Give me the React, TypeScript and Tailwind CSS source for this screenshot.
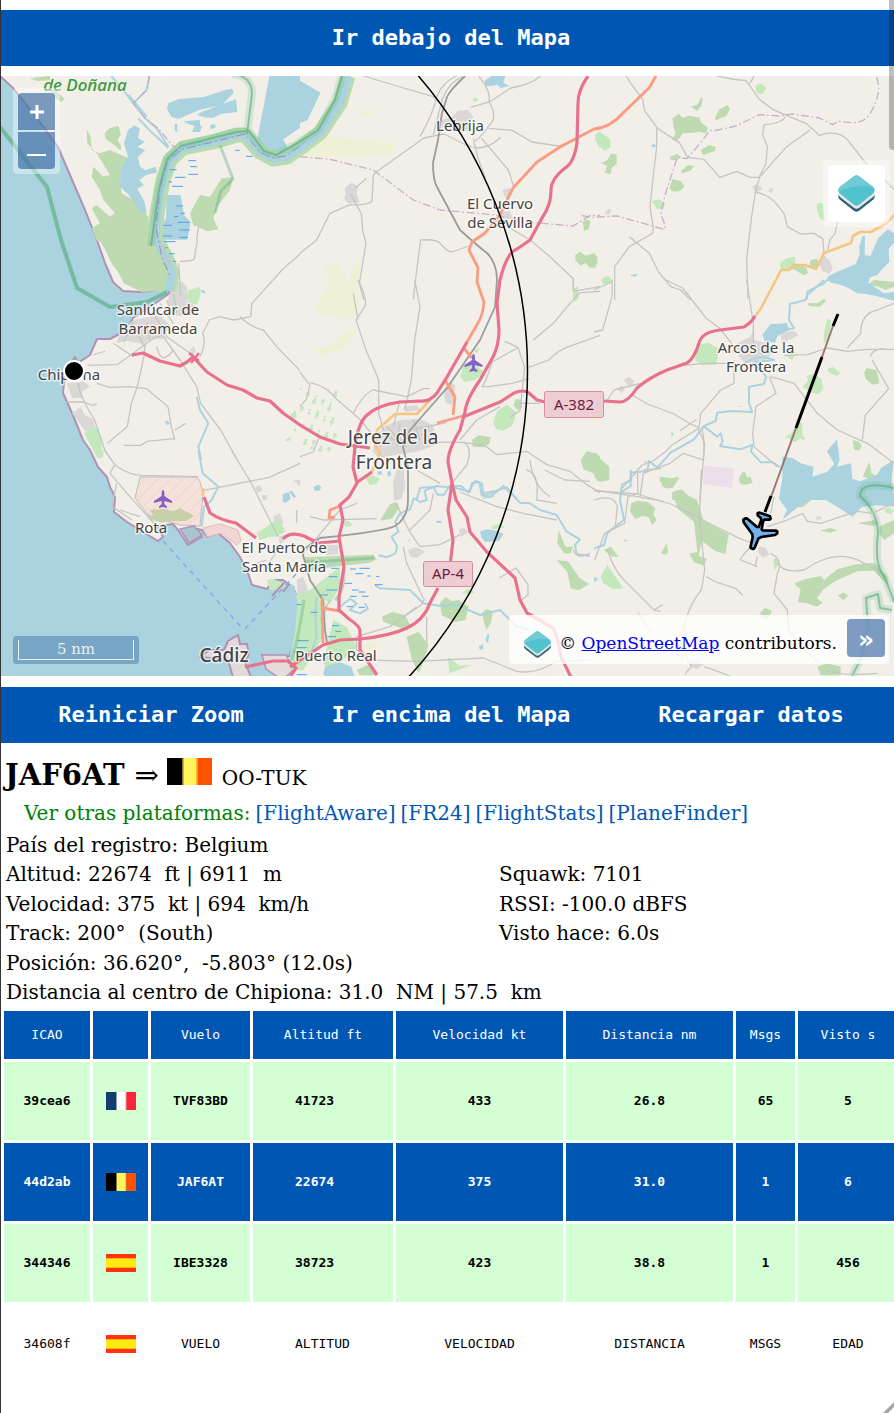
import type { ReactNode } from 'react';

type Tile = {
  at: [number, number];
  wood?: string[];
  park?: string[];
  field?: string[];
  urban?: string[];
  water?: string[];
  stream?: string[];
  minor?: string[];
  admin?: string[];
  marsh?: string[];
};

/* Land cover and minor lines. Coordinates are thirds of a map unit, from the tile's corner. */
const tiles: Tile[] = [
  {
    at: [0, 0],
    wood: [
      'M260 388L272 410 275 450 300 460 330 450 385 475 388 500 360 540 365 580 400 600 445 650 450 722 290 722 275 685 300 670 275 625 290 615 330 650 345 640 310 600 300 570 275 530 280 500 310 530 330 525 290 460 262 430z',
      'M314 400L330 384 356 378 362 404 352 420 364 438 362 452 344 436 318 418z',
      'M665 535L700 532 690 570 655 615 640 655 655 688 622 694 580 675 570 640 600 585 630 590z',
      'M90 235l60-8 0 14-40 2z',
      'M150 264l20 10 24 24-12 8-22-18z',
    ],
    water: [
      'M808 228l92 0 0 155-50 35 12 24-22 22-50-6-18-40z',
      'M505 310l30-12 80-8 60-20 22-4 4 12-34 36-70 16-60 26-22-4-14-26z',
      'M600 338l66-26 42-14 4 38-50 6-24 12-26-2-20-8z',
      'M384 390L404 376 420 386 414 414 434 426 412 440 436 450 414 470 420 500 436 510 468 500 470 518 440 524 418 540 432 556 412 566 434 606 440 642 420 634 386 584 360 560 362 510 384 470 372 430z',
      'M500 585l42 0 10 60 20 20-10 54-72 0-6-40 14-26z',
      'M550 364l50-4 0 20-30-6zM586 372l20 6-6 18-24 0zM524 372l8 0 0 24-8-4zM630 376l14-4 4 10-16 6z',
    ],
    stream: ['M334 228L370 270 400 310 436 355 470 385 505 440', 'M448 228L440 270 400 310', 'M385 285l55 65M415 355l40 42 50 46'],
    minor: ['M596 680L590 720'],
    admin: ['M448 228l-8 42-40 40 36 46 40 30 40 50 30 16'],
    marsh: ['M565 482h23M570 500h22M565 523h29M510 509h20M525 532h32M506 546h10M516 559h33M706 451h13M738 469h20M529 618h20M543 640h12M533 667h34M522 650h13M490 676h26M538 690h31M488 708h29M538 712h26'],
  },
  {
    at: [300, 60],
    wood: ['M826 585l14-10 16 12 26-8 10 20-6 24-16 0-14-14-14 8-16-16zM848 486l12-8 12 6-6 24-14 4z'],
    park: ['M886 222l14-8 0 50-14-24zM518 116l12-4 4 10-12 4zM820 686l14-8 0 24-16 16z'],
    field: ['M0 240l90-10 195 22-10 30-130 8-145 0z', 'M75 620l40-8 30 60 20-60 16 0-6 90 30 16-110 0z', 'M180 155l30-6 10 16-30 6zM340 78l16-6 0 16-14 4z'],
    urban: ['M425 180l30-8 20-20 30-2 16 22-14 16 10 22-30 4-40-6-20 6zM134 384l20-16 20 10-4 20 8 30-34 2-12-14 6-16zM606 390l24-6 8 20-20 12zM600 456l30-2 8 20-26 8z'],
    water: ['M0 62l62 36-40 82-22 10z', 'M554 62l20-14 42 0-6 20 18 10-26 6-10-10-16 4-20 0z'],
    minor: [
      'M190 48L290 78 400 110 415 125', 'M470 48q-40 16-60 62-10 50-50 120', 'M0 580l50-40 40-80 60-26q50 4 66-10l4-80 12-10 140-100 60-12 60 30q60 30 110-20',
      'M400 225q20-80 28-110 20-50 60-65', 'M512 142l60-18 60-40q60-10 90-36', 'M536 48q40 50 30 75 30 50 0 75-20 30-40 45', 'M566 205l70 6 60 35 80 12 50-18',
      'M545 235l80 95 16 50', 'M520 235l14 60 22 60', 'M165 385l35-30', 'M150 400l34 60 4 50 10 40-20 120 14 50', 'M340 718l8-70 14-108q50-4 60 12 20 24 34 24l50-18', 'M590 480l100 60 60 50 70 66 0 36', 'M900 680l-80 14',
    ],
    admin: ['M0 290l90 8 130 32 120 90 80 30 160 14 100 22 140 12 50-32 30 0'],
  },
  {
    at: [594, 60],
    wood: [
      'M235 175l20-14 10 12 20-6 32 6 4 14 20 16-4 18-20-6-30 4-20 0-18 26-14-6 10-20-6-16zM290 140l20-6 12-22 4 4-4 22-12 14zM362 175l14-26 24-14 8 12-12 22-30 12zM320 270l24-14 20 4 0 12-22 8-14 6zM228 290l20-8 14 10-14 8-18 0zM262 332l20-16 18 2-10 14-26 8zM226 385l10-28 24 6 12 16-14 14-20 2zM22 310l18-10 12-20 16 4 0 28-14 10-4 20-18-4 8-20z',
      'M0 580l10 10 0 20-10 10zM580 620l20-10 36 12 6 18-14 6-20-14zM650 600l20-4 8 16-20 16-12-8z',
    ],
    park: ['M5 225l14-8 30 20 0 26-18 10-20-18zM484 78l16-8 18 14-14 20-16-6zM174 424l20-6 20 14-6 14-20 0zM22 656l20-8 14 12-14 12-18-6zM558 610l20-16 26-4 0 20-20 16-24 0zM668 432l18-4 4 26 2 30-14-10-8-20z'],
    urban: ['M30 460l14-14 8 4-6 14zM474 380l16-8 16 14-20 12zM524 386l16-2-6 14-10-2zM674 610l16-24 18 16 8 26-10 14-20-8z'],
    water: ['M700 650L720 640 755 625 785 612 797 584 796 560 806 528 813 528 812 586 830 588 852 535 882 508 900 520 900 548 884 566 886 606 862 630 850 645 828 652 820 680 850 690 870 704 900 700 900 722 860 712 780 692 740 672 710 668z', 'M170 256l12-4 4 10-10 0zM110 644l20-2-4 8-14-2z'],
    stream: ['M710 650L690 670 640 695 638 718'],
    minor: [
      'M96 48l20 30 30 40 6 34 36 50 0 60-12 100-8 80 10 60-2 18-70 40-44 60 0 100', 'M0 690l52-24', 'M106 530l60 50 28 56 36 44 30 10 30 30', 'M186 202l70 46 24 44 50 6 48 54 50-18 40 18 30 0',
      'M370 48q40 10 86 14l40 56 40 30 50 22 50 20 40 36q60-20 90 20l50 64 28 30', 'M480 48l-12 22', 'M574 170q-10 20-64 24l-4 30 14 36-4 50-20 40', 'M648 210l-70 50-80 90-12 36-14 90-14 120 4 120', 'M486 396q40 10 60 34l24 30 10 40 40 22 40-2 26 16 4 44', 'M700 575l8-36 14-16 10-40', 'M870 358l30 30',
    ],
    admin: ['M848 52q14 40-6 80-20 60-70 56l-40-4-16 10-40-20-80-12-40 6-60-4-70 34-64 14-14 0-40 50-30 34-28-4-36 110-14 60 14 36-4 10-140-40-80 4-30-6'],
  },
  {
    at: [0, 240],
    wood: ['M298 0l162 0 30 60 10 60-6 32-70 4-52-26-20-38-16-20-20-42z'],
    park: ['M566 150l34-10 2 20-10 34-26-6-6-20zM870 528l16-18 4 24-14 2zM856 600l10-8 6 8-10 4zM880 570l8-6 0 12zM252 580l30-20 14 10 10 50-10 34-20-30z'],
    urban: ['M500 190l20-60 26-6 16 20 0 40 34 20-4 20-60 4-20-20zM400 240l80-14 30 30-20 40-40 0-20 16-50-10-30 8 10-30zM200 430l50-6 20 16-24 14 0 20-30 0zM216 520l26-20 12 26 24 10 10 30-30 10z', 'M570 330l12-12 6 16-10 8z'],
    water: ['M494 545l8-4 8 10-8 4zM600 150l10 0 8 8-8 2z'],
    stream: ['M590 470L600 510 625 550 595 620 603 660'],
    minor: [
      'M262 376l90-2 110-80 30-10 70 50 20 10', 'M600 350q20-40 8-70l20-40 30-10 44 10 50-10 4-40 90-100 54-48', 'M720 230q30 30 70 40l40 50 70 72', 'M490 290l50 70 50 80 12 50 60 80 50 90', 'M240 460l-4-30M234 430q10 50 50 110l30 90 20 30', 'M436 310l-4 40-20 90-18 50-12 70-60 50', 'M290 430l40 12 60-2 50 6 64 54 10 60 10 40', 'M524 570l34-20', 'M372 616l50 0 20-12 80-8', 'M340 310l60 40M470 320q14 60 50 10M280 345l36-12M200 486l50 0 30 10 10-6', 'M480 0l30 80M536 70l6 100M540 64q50 0 44-14l8-50', 'M372 306l28-60M400 256l30 60M440 250l10 56M460 220l40 66M480 190l40 60M500 180l20 50M520 160l10 60',
    ],
    marsh: ['M492 5h34M496 23h7M507 41h17M519 64h10'],
  },
  {
    at: [300, 280],
    wood: ['M516 480l20-14 36 6-4 20-20 10-30-2zM842 540l18-26 30 6 10 10 0 70-20-20-30-12zM640 376l8-20 18 4 0 24-14 6z'],
    park: ['M480 290l10-34 30-10 20 20 14 14-30 20-30 6zM580 430l10-36 30-20 30 24-14 40-28 14-20-6zM200 600l20-12 18 10-10 14-18 4zM820 40l14-24 2 40-14 10zM520 210l20-6-10 16z'],
    field: ['M60 50l50-50 60 0-10 40 20 30-20 40-30 10-30-18-50 0z', 'M40 210l60-20 50-40 20 6-40 50-60 20z', 'M870 425l14-10 0 16z'],
    urban: ['M250 440l50-20 60-4 40 20 8 60-60 20-60 8-50 10-20-20 10-40zM310 380l40-4 10 14-44 6zM430 330l20-24 16 10-10 60-20-10zM280 600l14-40 18 10 2 60-20 30-14-34z'],
    water: ['M40 622l12-6 12 4-6 12-14 0zM234 574l10 0 2 10-14 0zM262 576l10-4 2 14-10 4z'],
    stream: ['M350 660l10-36 40-4 12 24 20 0 16-26 36 0 20 20 22-36 20 10 4 30 40-10 30-10 30 34'],
    minor: [
      'M174 0q30 60 20 80l-26 40 30 90 38 90 0 100 20 70', 'M344 0l16 80-16 100-10 120-20 90', 'M0 276l30 40-10 40-20 24', 'M30 308q50 10 80 50l70 60 40 50', 'M160 400q30-60 60-70l100 20 50-24 20 0', 'M300 360l-20 80M330 450l110-22M260 440l50 50M250 460l70 40M340 420l20 60M300 430l-10 70',
      'M700 180l60-50 50-60 30-32 60-4', 'M686 262l60-22q30-30 60-40l94-34', 'M655 202l-78 44-20 56-10 18 20 0 70-10 50-14M614 184l40 18 20 60-14 130-30 20', 'M380 490q100-10 180 10l30 24 90-10 60 40 70 20 50 40 40 24', 'M480 480l50-60 70-40M490 485q30 20 10 70l-40 50', 'M350 570l70 40M0 530l40-14 20-50', 'M660 370l60 0', 'M690 540q10 80 60 110M820 0l0 30', 'M160 40l14 80',
    ],
  },
  {
    at: [594, 280],
    wood: ['M810 280l8-16 30 6 8 40-20 4-20-16zM640 70l30 0 20-14 6 8-20 16-30-2zM0 520l46 40 0 40-30 6-16-30zM196 600l14-8 18 6 20-8 8 4-20 30-22 0zM234 636l30-8 30 32-60 0zM436 590l14-18 10 20 12 10-4 10-20 2-12-6zM776 480l20 6 8 14-10 12-14-4zM806 590l20-44 6 34 20 10-10 10zM820 16l20-16 60 6 0 14-26 10-20-10z'],
    park: ['M302 240l12-46 30-6 32 20-10 46-40 2zM626 320l16-18-4-14 20-6 24 14 6 30-14 16-20-4zM700 268l16-8 24 20-12 8-22-10zM572 470l20-8 20-40 14 10-2 28 10 20-16-4-14 10zM22 0l30 0 0 10-24 2zM690 160l10-44 12 4-8 60-16 10zM580 230l16-20 10 10-12 20z'],
    urban: ['M430 190l40-20 10-24 0 34 40 10 14 30-20 20-60 10-20-20zM560 160l40-8 14 14-30 14-20 14zM90 300l14-10 18 14-14 20zM70 324l16-8 6 14-12 10zM148 546l10-8 0 14z'],
    water: [
      'M695 0L810 0 840 20 870 40 900 36 900 52 850 46 790 40 760 22 720 8z', 'M505 165l24-32 50-4 6 22-34 16-8 22-30-6z',
      'M565 530l30 4 26 16 38 10-4 30 44-14 22-24-22-38 30-36 8 62-8 20 42-10 4 46 24 8 50-20 12-20 38-24-6 60 12 80-60-4-40 4-30 30-30-20-50-30-50 0-40 26-40 34 14-30-24-34 10-60z', 'M232 456l6 4 0 8-6-2zM434 378l8 0-4 4z',
    ],
    stream: ['M690 0L640 45 635 60 588 72 585 120 600 145 560 152', 'M450 250q50-30 90-10l-60 6 36 44-6 22-45 8 0 50 10 26-65-3-40 5-5 25-35 15-30 40-70 40-40 45-25-20-5 30-50 5 0 40-30 20', 'M330 440l40 30 10-10 6 24-8 14 60 10 37-13-4 20 30 32 36 0 20 14'],
    minor: [
      'M0 156l26-6 28-100 0-50', 'M216 0l50 24 70 90 40 30 40 50', 'M458 0l20 130 0 60', 'M40 360l20-30 80-20M110 342l50 30 80 30 50 30 24 10', 'M420 240l0 70-40 20-60 70-6 50 18 40-14 170', 'M314 445l-80 50-20 20-40 30-30 10-60 70', 'M308 418l-50 34', 'M270 256l60-6 110 0', 'M570 226l70-2 60-20 60 10 60-6 80 0', 'M760 204l40-44q0-60 50-70l50-20', 'M830 230q0-20 40-24M834 240l50 86-70 80-10 80', 'M530 290l70 20 70 90 60 50 90 40 80 60', 'M550 560l-70-60-4-40 10-80 60-40-20-50', 'M324 440q10 60 4 100l-60-20-40 30-80 30-10 70', 'M0 630l130 20 80 14',
    ],
  },
  {
    at: [0, 450],
    wood: ['M446 180l30-6 30 10 40-10 40 26-10 12-60 0-30 6-40-10z'],
    park: ['M770 250l30-20 24-20 24 16 8 20-28 14-18 0-30 10zM800 390l20-4 40 20-20 14-30 0zM280 0l30 0 0 20-16 6z'],
    urban: ['M820 200l20-10 10 30-20 10zM836 260l16-6 0 20-12 10zM766 110l14-4 8 16-18 6zM784 136l18-2 0 14-12 4zM880 90l20 0 0 20z'],
    water: ['M848 132l20-6 4 20-14 12-10-2zM868 124l8-2 12 18-8 4z'],
    stream: ['M595 0L608 70 655 110 635 150 612 170 605 230'],
    minor: ['M314 0l30 44q40 30 80 32l170 4M344 44l-14 26 60 70 90 100M694 0l60 100 80 160', 'M608 122l200-40 92-42', 'M350 100l-14 70 60 40M360 180l60 20M890 180l0 40', 'M800 350l40-60M770 340l30-10'],
    marsh: ['M892 571h8M880 605h20'],
  },
  {
    at: [290, 470],
    wood: ['M40 262l210-8 10 14-20 10-110 12-70 14zM350 500l36-14 30 40-20 60-10 24-20-40zM276 440l30-14 40 10 14 30-20 10-60-20zM450 400l16-20 20 14 20-4 30 20-10 40-30 6-40-20zM575 430l14-14 20 10-6 30-14 24zM806 180l20 50 24 0-8 20-20 0-20-30zM800 270l34 4 34 50 30 18-30 18-26-4-10-50zM270 152l30-50 20-6 6 20-20 30zM200 600l40-18 20 34-50 0z'],
    park: ['M226 24l20-10 24 14-24 14zM156 156l20-4 12 14-20 6zM604 170l26-10 14 12-36 6zM516 370l16-14 22 10-16 8zM0 380l90-30 20 60-10 90-60 100-40 0zM60 360l90-70 0 60-30 50zM130 450l40 20 30 60-80 80-20-30zM406 450l4 70 0 20M474 560l4 50 70-26-40 4-30-24z'],
    field: ['M220 530l10-16 40 10-4 16-40 0z'],
    urban: ['M354 240l24-8 28 12-26 20-18-4zM104 225l40 0 0 28-36 2zM310 40l16-24 18 10-8 60-24 6zM352 212l8-6 0 10zM506 180l14-8 14 14-20 14zM20 330l20-10 14 40-30 40zM574 66l40-6 0 20-36 8z'],
    water: ['M570 184l20-6 30 4 20 10-12 20-42 4-12-14zM0 340l14 8 8 50-6 80-8 50-8 90zM100 610l6-20 44-14 34 14 10 30-90 0zM76 48l12-4 6 10-12 6zM438 152l18 0-4 8-12-2zM586 510l8-20 4 6-4 24zM566 530l12-8 2 14-10 4z'],
    stream: ['M900 258L860 252 855 225 870 208 830 185 800 135 750 120 720 100 690 98 640 48 600 82 575 75 568 36 545 40 540 65 500 55 440 48 404 62 410 90 390 96 372 84 360 118 330 130 316 155 325 185 305 200 322 230 316 250 290 262 265 255', 'M255 345L270 355 360 360 400 400 450 408 500 405 570 435 630 420 680 470 720 480', 'M40 290l60-6 40-4', 'M150 410l30-24 20 14-20 20 30 10 24-14-10-16', 'M80 380l-4 60 4 60-20 60'],
    minor: ['M50 240l100-120 50-20', 'M60 140l40 10 160-4', 'M340 230l10 50 50 105M404 385l-10 20-90 60M200 500l100-30 80-60', 'M230 570l150 4 200-10 100 40q60 10 120-30l100-4', 'M320 100q30 80 70 130l60-6 60-30', 'M510 66l110 44 80 20 100 20M710 0q40 10 30 90l60 10', 'M628 324l50-30 36 50 0 30-24 20', 'M360 180l60-60 10-50', 'M410 440l0 80M120 390l-30 60', 'M764 0l60 30 76 4', 'M200 500l0 40 60 30', 'M850 240q10 30 50 10'],
    marsh: ['M124 295h22M116 320h26M108 360h34M180 297h18M208 295h32M196 311h24M164 340h22M232 318h10M254 344h24M186 360h20M180 379h20M216 379h20M206 366h20M170 410h18M206 412h18M24 512h32M20 533h30M62 427h20M126 467h22M112 500h26M90 375h24M136 484h18M20 614h30M20 404h14M258 320h10'],
  },
  {
    at: [594, 470],
    wood: ['M238 75l10-16 60 30 20 60 50 30 26 14-10 60-30-10-40-30-10 44 24 10-8 20-30-10-14-26 24-6-10-90-50-40zM112 100l18-8 30 4 24 18-6 20 10 16-14 16-10-24-20-4-20 10-16-24zM0 0l40 0 0 20-30 14-10-20zM196 20l50 6-20 30-20-6zM434 30l36-10 6 20-30 0zM606 110l14-30 20-14 16 20-30 26zM202 250l16-30 4 30-10 4zM602 340L632 328 680 318 690 330 730 298 780 284 840 278 880 320 884 348 840 302 790 304 730 330 690 356 668 384 686 398 668 410 640 400 612 396 620 356 606 348zM678 182l30-8 22 6-20 8zM790 160l50-10 16 10-20 8zM732 376l16-8 14 8-14 16zM498 430l14-16 22 8-10 24-16 0zM856 170l44-20 0 40-30 20-14-20zM670 590l30-10 40 10 0 26-60 0zM30 240l20-10 24 30-20 0z'],
    park: ['M20 320l20-36 24 36 24 34-30 4-30-18zM538 270l12-8 4 20-12 20zM870 120l14-8 16 10-8 10-16-4zM130 420q20 60 50 70z'],
    urban: ['M300 110l16-4 10 40-14 14-16-20zM496 230l20 4 10 20-20 10-16-20zM664 142l16-4 4 8-14 4zM290 572l16-4 24 14-20 16-20-6z'],
    water: ['M0 320l14 8-14 8zM92 208l8 4-8 4z'],
    stream: ['M110 0L112 30 84 44 78 90 90 150 50 180 40 190 30 225 0 235'],
    minor: ['M130 0l2 70-30 10-10 80-60 30-30 80M40 240q20 60 50 90l90 90 26-16M180 420l20 4', 'M0 62l130 10 100 30 120 60 80 40 50 20', 'M322 0l-6 140 16 160-10 60q-50 60-60 160l30 70-20 24', 'M336 320l30 16 60 20 20 20', 'M520 170l60-20 46-20 14 24 40 6 60-20 50-16 46 6 60-30', 'M550 280q20 30 80 20 100-70 180-20l40 20', 'M480 220q-40 40-40 50l50 20M530 250q40 20 20 60l-10 60 40 50 4 60 46 60 50 40', 'M330 590q60 20 80 30M690 600q60 20 160 10', 'M0 90q60-20 70 20l-6 60M490 260l-6 30', 'M200 520l70 46', 'M540 80l-10 50M150 0l50-4'],
  },
];

const motorways = [
  'M132 355L143 353 160 361 180 366 187 362 193 357 207 372 227 385 243 390 257 398 270 401 283 413 300 425 320 437 340 444 370 448',
  'M467 342L447 377 437 393Q430 402 420 401L400 402Q377 405 366 416 358 424 355 447L353 467 357 483 349 497 340 505 343 520 339 537 344 567 339 597 339 610 349 619Q360 626 360 631L360 650 377 675',
  'M372 472L356 483',
  'M588 76Q578 90 578 103L577 143Q574 163 565 168 550 180 551 191 551 205 542 218L530 240Q522 246 512 252 505 260 500 280L497 303 499 330Q499 345 493 357L480 380Q466 400 465 412L460 430Q448 450 448 462L452 483 448 510 453 540 450 566',
  'M438 588L430 603Q424 620 407 628T360 639L340 640 323 645 290 667',
  'M452 483L456 500 467 517 470 532 487 552 515 578 520 600 527 613 553 628Q558 637 561 657L571 677',
  'M463 417L500 402 514 393Q523 389 529 393L537 400 545 402',
  'M604 401L620 402Q628 402 637 388 650 377 667 370L687 363Q694 359 699 343 702 332 720 330L744 327Q752 322 755 316',
  'M204 497L210 513Q220 520 236 523L256 538',
  'M283 539Q290 531 304 536L318 543 340 541',
  'M245 667L273 661 288 661 296 668 290 677',
];

const primaries = [
  'M656 76L649 88 624 112Q610 128 594 129L560 147 537 162 513 188 507 200 500 215 485 233 472 242 469 250 478 268 477 282 484 302Q483 315 478 323L467 342',
  'M463 347L472 358', 'M445 380L455 397 453 415', 'M437 423L463 416', 'M340 506l-10 4-1 8 6-1', 'M322 608l18 3', 'M322 598l1 45',
];

const secondaries = [
  'M755 316L760 310 776 280 781 270 789 270 794 265 805 265 816 269 824 253 851 243 853 236 860 232 871 232 887 223 894 215',
  'M430 400L417 414 395 414 377 430 375 445 380 453 372 472', 'M203 488v8',
];

const railways = [
  'M465 76Q450 90 447 97L442 113 438 140 433 163Q433 180 437 187L460 230Q480 248 487 253 497 263 497 280L495 307 480 340 447 388 410 430 403 447 408 467 408 500Q408 518 395 526 387 531 320 538L304 549 303 555 310 580 323 600 325 630 327 643',
];

function Layer({ pick, fill = 'none', stroke = 'none', width = 0, dash }: { pick: keyof Tile; fill?: string; stroke?: string; width?: number; dash?: string }) {
  return (
    <g fill={fill} stroke={stroke} strokeWidth={width * 3} strokeDasharray={dash} strokeLinejoin="round">
      {tiles.map((tile) => (
        <g key={tile.at.join()} transform={`translate(${tile.at[0]} ${tile.at[1]}) scale(0.33333)`}>
          {((tile[pick] as string[] | undefined) ?? []).map((d) => (
            <path key={d} d={d} />
          ))}
        </g>
      ))}
    </g>
  );
}

function Lines({ paths, stroke, width }: { paths: string[]; stroke: string; width: number }) {
  return (
    <g fill="none" stroke={stroke} strokeWidth={width} strokeLinejoin="round">
      {paths.map((d) => (
        <path key={d} d={d} />
      ))}
    </g>
  );
}

const airport = 'M0-9q1.4 0 1.4 3v3L9 2v2L1.4 2v3L4 7.500v1.500L0 8-4 9V7.500L-1.400 5V2L-9 4V2L-1.400-3v-3q0-3 1.400-3z';

function MapDrawing() {
  return (
    <svg viewBox="1 76 893 600" preserveAspectRatio="xMidYMid slice" className="block size-full" role="img" aria-label="Mapa">
      <defs>
        <pattern id="hatch" width="9" height="9" patternUnits="userSpaceOnUse" patternTransform="rotate(45)">
          <rect width="9" height="9" fill="#f3e2da" />
          <path d="M0 0v9" stroke="#f5d3cc" strokeWidth="2" />
        </pattern>
      </defs>
      <rect x="0" y="76" width="895" height="601" fill="#f2efe9" />
      <path
        d="M0 76L13 88 40 122 58 147 70 175 85 210 97 240 105 263 113 282 123 291 140 292 167 289 170 293 160 300 133 318 127 330 110 339 97 339 90 355 78 363 75 357 65 373 63 393 72 413 83 440 90 450 98 467 107 477 110 487 115 497 114 512 127 522 143 532 158 541 163 537 157 526 173 524 178 530 188 545 202 537 193 528 202 530 207 537 218 533 230 543 240 557 248 573 252 585 267 589 273 580 283 580 293 587 299 602 298 620 293 637 290 656 273 657 262 655 268 664 280 677 0 677z"
        fill="#aad3df" stroke="#b093b4" strokeWidth="2" strokeLinejoin="round"
      />
      <path d="M233 677l-5-17-28-3 9-7 15 0 4-9 10-6 2 9 7 0 2 10-4 8 6 15z" fill="#e0dadb" stroke="#b093b4" strokeWidth="2" />
      <path d="M262 655l24 0 8 14-8 8-8 0-12-8z" fill="#e6dcdb" stroke="#b093b4" strokeWidth="1.500" />
      <Layer pick="field" fill="#eff0d6" />
      <Layer pick="urban" fill="#dad8d6" />
      <Layer pick="wood" fill="#bddab1" />
      <Layer pick="park" fill="#c3e8bc" />
      <g fill="#c4e5bd">
        {Array.from({ length: 46 }, (_, i) => (
          <circle key={i} cx={301 + ((i * 17) % 36)} cy={389 + ((i * 23) % 62)} r={1 + (i % 3) / 2} />
        ))}
      </g>
      <path d="M704 466l30 2-2 20-29-4z" fill="#ecdfea" />
      <Layer pick="water" fill="#aad3df" />
      <path d="M348 76L340 103 320 133 300 148 287 157 273 159 260 152 245 135 237 135 213 142 183 148 170 160 163 180 157 213 155 240 157 240 167 260 172 273 169 291" fill="none" stroke="#b9dcae" strokeWidth="15" strokeLinejoin="round" />
      <path d="M348 76L340 103 320 133 300 148 287 157 273 159 260 152 245 135 237 135 213 142 183 148 170 160 163 180 157 213 156 240 167 260 172 273 169 291" fill="none" stroke="#aad3df" strokeWidth="8" strokeLinejoin="round" />
      <g fill="none" stroke="#54aa78" strokeLinejoin="round">
        <g strokeWidth="8" strokeOpacity="0.180">
          <path d="M342 76l-7 24-17 30-22 14-20 11-12-4-15-20-13 1-55 14-14 13-8 30-8 57M232 74q20 2 20 20l-5 40" />
          <path d="M894 488q-34-8-34 8 18 16 18 38-4 30 6 42l8 20 2 6M852 676q14-24 16-50l-2-28 12-4 2 14 12 2" />
        </g>
        <g strokeWidth="2" strokeOpacity="0.600">
          <path d="M342 76l-7 24-17 30-22 14-20 11-12-4-15-20-13 1-55 14-14 13-8 30-8 57M232 74q20 2 20 20l-5 40" />
          <path d="M894 488q-34-8-34 8 18 16 18 38-4 30 6 42l8 20 2 6M852 676q14-24 16-50l-2-28 12-4 2 14 12 2" />
        </g>
        <path d="M220 145l13 34-12 12-6 22" strokeWidth="3" strokeOpacity="0.350" />
        <path d="M0 127l47 60 14 53 16 48 33 19 37-5 20-10" strokeWidth="4" strokeOpacity="0.600" />
        <path d="M304 562l24-1 46-3M343 560q4 30-8 40M292 660q8-30 12-60" strokeWidth="3" strokeOpacity="0.350" />
      </g>
      <path d="M300 146l-14 10-14 2-12-6-15-18-32 8-30 7-15 11-8 28-4 40 6 30 8 18" fill="none" stroke="#a08fa8" strokeWidth="1" strokeDasharray="9 3 2 3" />
      <Layer pick="stream" stroke="#aad3df" width={2} />
      <Layer pick="marsh" stroke="#4ba0f4" width={1} />
      <path d="M140 477l56 0q4 0 7 17l-3 32-20-1-32-10-13-17z" fill="url(#hatch)" stroke="#bdbdbd" strokeWidth="1" />
      <path d="M150 510l14-1 10 2 6-3 14 8-8 5-30 0z" fill="#c8d0a8" />
      <path d="M203 528l17-4 18 6 3 11-4 4-16-12-14 4z" fill="#f1d6d4" stroke="#e8b9b9" strokeWidth="1" />
      <path d="M180 529l14-3 8 9-13 8z" fill="#a9c6d0" stroke="#b093b4" strokeWidth="1.500" />
      <Layer pick="minor" stroke="#c5c5c5" width={1.3} />
      <Layer pick="admin" stroke="#c7b0c9" width={1.3} dash="24 8 5 8" />
      <path d="M163 541L243 629M245 629L297 573" fill="none" stroke="#8aa7e8" strokeWidth="1.500" strokeDasharray="5 5" />
      <path d="M272 596l12-13M283 592l6-8" stroke="#b093b4" strokeWidth="2" />
      <Lines paths={railways} stroke="#9b9b9b" width={1.8} />
      <Lines paths={secondaries} stroke="#f7c581" width={2.6} />
      <Lines paths={primaries} stroke="#fa9b82" width={2.8} />
      <Lines paths={motorways} stroke="#e8718d" width={3.2} />
      <path d="M189 353l10 8M199 353l-8 10" stroke="#e8718d" strokeWidth="2.500" />
      <g fill="#8461c4">
        <path d={airport} transform="translate(473.500 363)" />
        <path d={airport} transform="translate(163 499)" />
      </g>
      <g fill="#edccd3" stroke="#d78d9e" strokeWidth="1">
        <rect x="544.500" y="391.500" width="59" height="26" rx="2" />
        <rect x="423.500" y="561.500" width="49" height="25" rx="2" />
      </g>
      <g fontFamily="'Noto Sans', sans-serif" textAnchor="middle">
        <g fill="#6d1b3c" fontSize="15">
          <text x="574" y="410">A-382</text>
          <text x="448" y="579">AP-4</text>
        </g>
        <text x="85" y="91" fontSize="17" fontStyle="italic" fontWeight="500" fill="#3b9a3b" stroke="#f2efe9" strokeWidth="2" paintOrder="stroke">de Doñana</text>
        <g fill="#444" stroke="#fff" strokeOpacity="0.650" strokeWidth="3" strokeLinejoin="round" paintOrder="stroke" fontSize="15">
          <text x="460" y="131">Lebrija</text>
          <text x="500" y="209">El Cuervo</text>
          <text x="500" y="228">de Sevilla</text>
          <text x="158" y="315">Sanlúcar de</text>
          <text x="158" y="334">Barrameda</text>
          <text x="69" y="380">Chipiona</text>
          <text x="756" y="353">Arcos de la</text>
          <text x="756" y="372">Frontera</text>
          <text x="151" y="533">Rota</text>
          <text x="284" y="553">El Puerto de</text>
          <text x="284" y="572">Santa María</text>
          <text x="336" y="661">Puerto Real</text>
          <g fontSize="19">
            <text x="393" y="444">Jerez de la</text>
            <text x="394" y="469">Frontera</text>
            <text x="224" y="662" fontWeight="500">Cádiz</text>
          </g>
        </g>
      </g>
      <circle cx="74" cy="371" r="453.500" fill="none" stroke="#000" strokeWidth="1.500" />
      <circle cx="74" cy="371" r="10" fill="#000" stroke="#fff" strokeWidth="2" />
      <path d="M833 326L822 357M796 428L771 497" stroke="#9c7676" strokeWidth="2" />
      <path d="M838 314L833 326M822 357L796 428M771 496L765 512" stroke="#000" strokeWidth="3" />
      <path
        transform="translate(594 470) scale(0.33333)"
        d="M491 129L497 128 528 139 530 146 527 149 511 149 507 156 503 178 506 181 546 182 550 185 549 191 543 195 502 201 493 206 482 233 478 237 470 234 470 229 476 202 475 193 449 157 448 149 454 145 460 146 489 171 494 171 502 150 501 145 491 136z"
        fill="#73b1ee" stroke="#000" strokeWidth="8" strokeLinejoin="round"
      />
    </svg>
  );
}

function LayersIcon({ className }: { className: string }) {
  return (
    <svg viewBox="0 0 112 112" className={className} aria-hidden="true">
      <g strokeWidth="26" strokeLinejoin="round">
        <path d="M56 33L98 65 56 98 14 65z" fill="#2f6572" stroke="#2f6572" />
        <path d="M56 24L98 56 56 89 14 56z" fill="#e6e6e6" stroke="#e6e6e6" />
        <path d="M56 14L98 46 56 80 14 46z" fill="#52c2cf" stroke="#52c2cf" />
      </g>
      <path d="M6 36L48 4q8-5 16 0L106 36Q44 26 1 52q-1-11 5-16z" fill="#6fcbd5" />
    </svg>
  );
}

function Flag({ country, className }: { country: 'fr' | 'be' | 'es'; className: string }) {
  const stripes = { fr: ['#143c6c', '#ffffff', '#fb2438'], be: ['#000000', '#fff45a', '#ff5200'], es: ['#ff3310', '#ffea14', '#ff3310'] }[country];
  const names = { fr: 'France', be: 'Belgium', es: 'Spain' };
  return (
    <svg viewBox="0 0 30 18" className={className} role="img" aria-label={names[country]}>
      {country === 'es' ? (
        <>
          <rect width="30" height="18" fill={stripes[0]} />
          <rect y="4" width="30" height="10" fill="#f99a12" />
          <rect y="4.700" width="30" height="8.600" fill={stripes[1]} />
        </>
      ) : (
        <>
          <rect width="10" height="18" fill={stripes[0]} />
          <rect x="10" width="10.500" height="18" fill={stripes[1]} />
          <rect x="20.500" width="9.500" height="18" fill={stripes[2]} />
          <rect x="9.500" width="1.500" height="18" fill={stripes[0]} fillOpacity="0.500" />
          <rect x="19.500" width="1.500" height="18" fill={stripes[2]} fillOpacity="0.500" />
        </>
      )}
    </svg>
  );
}

function BarButton({ children }: { children: ReactNode }) {
  return (
    <button type="button" className="h-14 flex-1 bg-[#0057b3] pb-0.5 text-center font-['DejaVu_Sans_Mono',monospace] text-[22px] font-bold text-white">
      {children}
    </button>
  );
}

const platforms = ['FlightAware', 'FR24', 'FlightStats', 'PlaneFinder'];

const details: [string, string][] = [
  ['País del registro: Belgium', ''],
  ['Altitud: 22674  ft | 6911  m', 'Squawk: 7101'],
  ['Velocidad: 375  kt | 694  km/h', 'RSSI: -100.0 dBFS'],
  ['Track: 200°  (South)', 'Visto hace: 6.0s'],
  ['Posición: 36.620°,  -5.803° (12.0s)', ''],
  ['Distancia al centro de Chipiona: 31.0  NM | 57.5  km', ''],
];

const headers = ['ICAO', '', 'Vuelo', 'Altitud ft', 'Velocidad kt', 'Distancia nm', 'Msgs', 'Visto s'];

const flights: { country: 'fr' | 'be' | 'es'; tone: string; cells: string[] }[] = [
  { country: 'fr', tone: 'bg-[#d4ffd4] font-bold', cells: ['39cea6', 'TVF83BD', '41723', '433', '26.8', '65', '5'] },
  { country: 'be', tone: 'bg-[#0057b3] font-bold text-white', cells: ['44d2ab', 'JAF6AT', '22674', '375', '31.0', '1', '6'] },
  { country: 'es', tone: 'bg-[#d4ffd4] font-bold', cells: ['344346', 'IBE3328', '38723', '423', '38.8', '1', '456'] },
  { country: 'es', tone: 'bg-white', cells: ['34608f', 'VUELO', 'ALTITUD', 'VELOCIDAD', 'DISTANCIA', 'MSGS', 'EDAD'] },
];

export default function App() {
  return (
    <div className="relative min-h-screen overflow-hidden border-l border-[#333338] bg-white font-['DejaVu_Serif',serif] text-black">
      <div className="flex min-w-[900px] pt-2.5">
        <BarButton>Ir debajo del Mapa</BarButton>
      </div>

      <div className="relative mt-2.5 h-[600px] overflow-hidden">
        <MapDrawing />
        <div className="absolute top-3 left-3 flex flex-col gap-0.5 rounded bg-white/40 p-[5px]">
          <button type="button" aria-label="Acercar" className="flex size-[37px] items-center justify-center rounded-t-sm bg-[#003c88]/50">
            <svg viewBox="0 0 14 14" className="size-3.5" aria-hidden="true">
              <path d="M0 7h14M7 0v14" stroke="#fff" strokeWidth="3" />
            </svg>
          </button>
          <button type="button" aria-label="Alejar" className="flex size-[37px] items-center justify-center rounded-b-sm bg-[#003c88]/50 pt-2">
            <svg viewBox="0 0 19 2" className="h-0.5 w-[19px]" aria-hidden="true">
              <path d="M0 1h19" stroke="#fff" strokeWidth="2" />
            </svg>
          </button>
        </div>

        <div className="absolute top-[84px] right-1 rounded bg-white/40 p-[5px]">
          <button type="button" aria-label="Capas" className="flex size-[57px] items-center justify-center rounded-sm bg-white">
            <LayersIcon className="size-[37px]" />
          </button>
        </div>

        <div className="absolute bottom-3 left-3 rounded bg-[#003c88]/30 px-[5px] pt-1 pb-1">
          <div className="h-5 w-[116px] border border-t-0 border-[#eee] text-center text-[15px] leading-[18px] text-[#eee]">5 nm</div>
        </div>

        <div className="absolute right-[5px] bottom-3 flex items-start rounded bg-white/80 pt-1 pr-1 pb-[7px] pl-[15px] text-[17px]">
          <div className="flex h-[38px] items-center pt-3">
            <LayersIcon className="size-[27px]" />
            <p className="ml-2 mr-[10px] whitespace-nowrap">
              © <a href="#osm" className="text-[#0000ee] underline">OpenStreetMap</a> contributors.
            </p>
          </div>
          <button type="button" aria-label="Contraer atribuciones" className="flex size-[38px] items-center justify-center rounded-sm bg-[#003c88]/50 pt-1 font-['DejaVu_Sans',sans-serif] text-[25px] font-bold text-white">
            »
          </button>
        </div>
      </div>

      <div className="mt-[11px] flex min-w-[900px] bg-[#0057b3]">
        <BarButton>Reiniciar Zoom</BarButton>
        <BarButton>Ir encima del Mapa</BarButton>
        <BarButton>Recargar datos</BarButton>
      </div>

      <section className="pt-[11px] text-[20px]">
        <div className="flex h-[43px] items-baseline pl-1 whitespace-pre">
          <h1 className="text-[29px] font-bold">JAF6AT</h1>
          <span className="ml-2.5 text-[29px]">⇒</span>
          <Flag country="be" className="ml-2 h-[27px] w-[45px]" />
          <span className="ml-2.5">OO-TUK</span>
        </div>
        <p className="flex h-[31px] items-center gap-[5px] pl-[23px] text-[green]">
          Ver otras plataformas:
          {platforms.map((name) => (
            <a key={name} href={`#${name}`} className="text-[#0057b3]">
              [{name}]
            </a>
          ))}
        </p>
        <div className="mt-0.5 grid h-[177px] auto-rows-fr pl-[5px]">
          {details.map(([left, right]) => (
            <div key={left} className="flex items-center leading-7 whitespace-pre">
              <span className={right ? 'w-[493px]' : ''}>{left}</span>
              <span>{right}</span>
            </div>
          ))}
        </div>
      </section>

      <table className="mt-px w-full min-w-[900px] table-fixed border-separate border-spacing-[3px] font-['DejaVu_Sans_Mono',monospace] text-[13px]">
        <colgroup>
          <col className="w-[86px]" />
          <col className="w-[55px]" />
          <col className="w-[99px]" />
          <col className="w-[140px]" />
          <col className="w-[167px]" />
          <col className="w-[167px]" />
          <col className="w-[59px]" />
          <col className="w-[100px]" />
        </colgroup>
        <thead>
          <tr className="h-12 bg-[#0057b3] text-white">
            {headers.map((header, i) => (
              <th key={i} scope="col" className="p-0 font-normal">
                {header}
              </th>
            ))}
          </tr>
        </thead>
        <tbody>
          {flights.map(({ country, tone, cells }) => (
            <tr key={cells[0]} className={`h-[78px] text-center ${tone}`}>
              <td className="p-0">{cells[0]}</td>
              <td className="p-0">
                <Flag country={country} className="mx-auto block h-[18px] w-[30px]" />
              </td>
              <td className="p-0">{cells[1]}</td>
              <td className="p-0">
                <span className="inline-block w-14 text-left">{cells[2]}</span>
              </td>
              {cells.slice(3).map((cell, i) => (
                <td key={i} className="p-0">
                  {cell}
                </td>
              ))}
            </tr>
          ))}
        </tbody>
      </table>

      <div className="absolute top-0 right-0 h-[150px] w-[5px] rounded-bl-sm bg-black/25" />
      <svg viewBox="0 0 11 11" className="absolute right-0 bottom-0 size-[11px]" aria-hidden="true">
        <path d="M0 11L11 0v5L5 11z" fill="#a6a6a6" />
      </svg>
    </div>
  );
}
